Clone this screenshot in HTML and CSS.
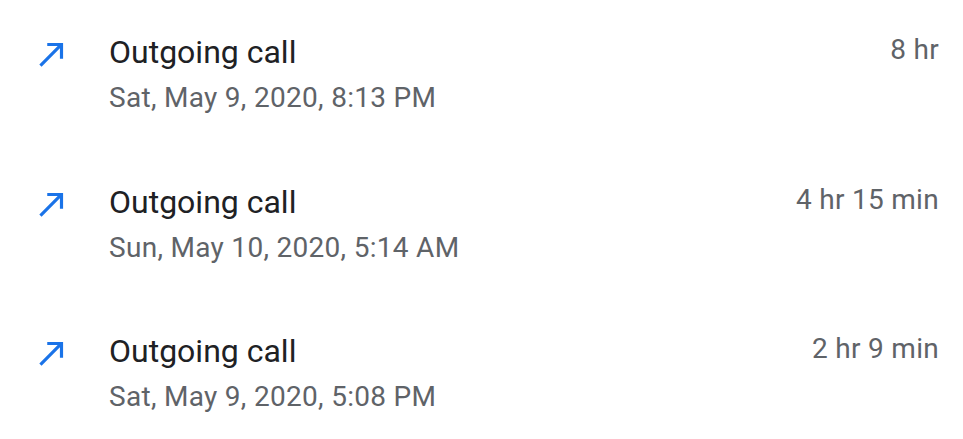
FILE: index.html
```html
<!DOCTYPE html>
<html>
<head>
<meta charset="utf-8">
<link rel="stylesheet" href="styles.css">
</head>
<body>
<ul class="calls">
  <li class="call">
    <svg class="icon" viewBox="0 0 24 24"><path d="M9 5v2h6.59L4 18.59 5.41 20 17 8.41V15h2V5z"/></svg>
    <div class="info">
      <div class="title">Outgoing call</div>
      <div class="date">Sat, May 9, 2020, 8:13 PM</div>
    </div>
    <div class="dur">8 hr</div>
  </li>
  <li class="call">
    <svg class="icon" viewBox="0 0 24 24"><path d="M9 5v2h6.59L4 18.59 5.41 20 17 8.41V15h2V5z"/></svg>
    <div class="info">
      <div class="title">Outgoing call</div>
      <div class="date">Sun, May 10, 2020, 5:14 AM</div>
    </div>
    <div class="dur">4 hr 15 min</div>
  </li>
  <li class="call">
    <svg class="icon" viewBox="0 0 24 24"><path d="M9 5v2h6.59L4 18.59 5.41 20 17 8.41V15h2V5z"/></svg>
    <div class="info">
      <div class="title">Outgoing call</div>
      <div class="date">Sat, May 9, 2020, 5:08 PM</div>
    </div>
    <div class="dur">2 hr 9 min</div>
  </li>
</ul>
</body>
</html>
```
FILE: styles.css
```css
html, body {
  margin: 0;
  padding: 0;
  background: #ffffff;
  font-family: Roboto, "Liberation Sans", sans-serif;
}
.calls {
  list-style: none;
  margin: 0;
  padding: 0;
  width: 963px;
}
.call {
  display: flex;
  align-items: flex-start;
  height: 149.5px;
  padding: 0 24px 0 33px;
  box-sizing: border-box;
}
.icon {
  width: 38px;
  height: 38px;
  fill: #1a73e8;
  margin-top: 35px;
  flex: none;
}
.info {
  flex: 1;
  margin-left: 38px;
  padding-top: 33px;
}
.title {
  font-size: 32px;
  line-height: 38px;
  color: #202124;
}
.date {
  font-size: 28px;
  line-height: 34px;
  letter-spacing: 0.3px;
  color: #5f6368;
  margin-top: 10px;
}
.dur {
  font-size: 28px;
  line-height: 34px;
  letter-spacing: 0.3px;
  color: #5f6368;
  padding-top: 33px;
}
```
